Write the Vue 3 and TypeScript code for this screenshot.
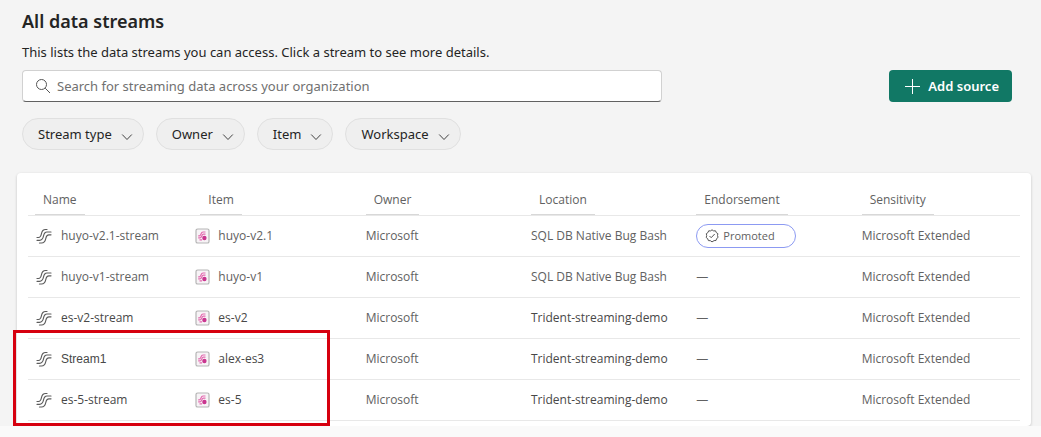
<script setup lang="ts">
interface StreamRow {
  name: string
  item: string
  location: string
  promoted: boolean
  tone: string
  plain?: boolean
}

const filters: string[] = ['Stream type', 'Owner', 'Item', 'Workspace']
const columns: string[] = ['Name', 'Item', 'Owner', 'Location', 'Endorsement', 'Sensitivity']
const rows: StreamRow[] = [
  { name: 'huyo-v2.1-stream', item: 'huyo-v2.1', location: 'SQL DB Native Bug Bash', promoted: true, tone: 'light' },
  { name: 'huyo-v1-stream', item: 'huyo-v1', location: 'SQL DB Native Bug Bash', promoted: false, tone: 'light' },
  { name: 'es-v2-stream', item: 'es-v2', location: 'Trident-streaming-demo', promoted: false, tone: 'dark' },
  { name: 'Stream1', item: 'alex-es3', location: 'Trident-streaming-demo', promoted: false, tone: 'dark', plain: true },
  { name: 'es-5-stream', item: 'es-5', location: 'Trident-streaming-demo', promoted: false, tone: 'dark' },
]
</script>

<template>
  <main class="page">
    <section class="streams">
      <header class="intro">
        <h1>All data streams</h1>
        <p>This lists the data streams you can access. Click a stream to see more details.</p>
        <div class="actions">
          <label class="search">
            <svg width="16" height="16" viewBox="0 0 16 16" fill="none" stroke="#555" aria-hidden="true">
              <circle cx="6.5" cy="6.5" r="5" />
              <path d="M10.2 10.2 15 15" />
            </svg>
            <input type="search" aria-label="Search streams" placeholder="Search for streaming data across your organization" />
          </label>
          <button type="button" class="add">
            <svg width="16" height="16" viewBox="0 0 16 16" stroke="#fff" aria-hidden="true">
              <path d="M8.5 1v15M1 8.5h15" />
            </svg>
            Add source
          </button>
        </div>
        <div class="filters">
          <button v-for="filter in filters" :key="filter" type="button" class="filter">
            {{ filter }}
            <svg width="12" height="12" viewBox="0 0 12 12" fill="none" stroke="#424242" aria-hidden="true">
              <path d="m1.2 4.5 4.8 5 4.8-5" />
            </svg>
          </button>
        </div>
      </header>

      <div class="card">
        <table>
          <thead>
            <tr>
              <th v-for="column in columns" :key="column" scope="col"><span>{{ column }}</span></th>
            </tr>
          </thead>
          <tbody>
            <tr v-for="row in rows" :key="row.name" :class="row.tone">
              <td>
                <div class="entry stream">
                  <svg width="16" height="16" viewBox="0 0 16 16" fill="none" stroke="#5c5c5c" stroke-width="1.2" stroke-linecap="round" aria-hidden="true">
                    <path d="M1 9.500h1.500C4.500 9.500 5 8 5.500 5.500S7.500 1.500 9.500 1.500H11" />
                    <path d="M1 12.300h2.500C6 12.300 7 10.500 7.500 8S9 4 11 4h4" />
                    <path d="M3.500 15H5.500C8 15 9.300 13 9.800 10.500S11.200 6.800 13 6.800h2" />
                  </svg>
                  <span :class="{ plain: row.plain }">{{ row.name }}</span>
                </div>
              </td>
              <td>
                <div class="entry item">
                  <svg width="15" height="16" viewBox="0 0 15 16" fill="none" aria-hidden="true">
                    <rect x="1" y="1" width="13" height="14" rx="1.600" fill="#f7f3f6" stroke="#b5b5b5" stroke-width="1.200" />
                    <path d="M3.200 7.800h1.300C6.500 7.800 5.500 4 8 4h2.500M3.200 9.800H5C7 9.800 6.500 6.200 8.500 6.200h2M4.500 11.800h2.500" stroke="#e36bb0" stroke-width="1.200" />
                    <circle cx="9.400" cy="10" r="2.200" fill="#c9358f" />
                  </svg>
                  <span>{{ row.item }}</span>
                </div>
              </td>
              <td>Microsoft</td>
              <td class="location">{{ row.location }}</td>
              <td>
                <span v-if="row.promoted" class="badge">
                  <svg width="14" height="14" viewBox="0 0 14 14" fill="none" stroke="#555" aria-hidden="true">
                    <path d="m7 .8 1.600 1.100 1.900-.1.800 1.800 1.600 1.100-.4 1.900.6 1.800-1.500 1.200-.6 1.900-1.900.1L7 12.900l-1.600-1.200-2-.1-.7-1.900-1.500-1.200.5-1.900-.4-1.900 1.600-1.100.8-1.800 1.900.1Z" />
                    <path d="m4.500 7 1.700 1.700L9.700 5" />
                  </svg>
                  Promoted
                </span>
                <span v-else class="dash">—</span>
              </td>
              <td>Microsoft Extended</td>
            </tr>
          </tbody>
        </table>
        <div class="highlight"></div>
      </div>
    </section>
  </main>
</template>

<style>
body {
  margin: 0;
  background: #fafafa;
}
</style>

<style scoped>
.page {
  font-family: 'Noto Sans', 'Open Sans', sans-serif;
  font-size: 13px;
  line-height: 20px;
  color: #242424;
}

.streams {
  background: #f4f4f4;
  padding: 9px 10px 0 17px;
}

.intro {
  padding: 0 19px 23px 5px;
}

h1 {
  margin: 0;
  font-size: 18px;
  font-weight: 600;
  line-height: 24px;
}

p {
  margin: 9px 0 8px;
}

.actions {
  display: flex;
  justify-content: space-between;
  gap: 24px;
}

.search {
  box-sizing: border-box;
  flex: 0 1 640px;
  height: 32px;
  display: flex;
  align-items: center;
  gap: 6px;
  padding: 0 12px;
  background: #fff;
  border: 1px solid #d1d1d1;
  border-bottom-color: #616161;
  border-radius: 4px;
}

.search input {
  flex: 1;
  min-width: 0;
  border: 0;
  padding: 0;
  outline: 0;
  background: none;
  font: inherit;
}

.search input::placeholder {
  color: #707070;
}

button {
  font: inherit;
  display: inline-flex;
  align-items: center;
  height: 32px;
  white-space: nowrap;
}

.add {
  gap: 8px;
  padding: 0 13px 0 15px;
  border: 0;
  border-radius: 4px;
  background: #117865;
  color: #fff;
  font-weight: 600;
}

.filters {
  display: flex;
  flex-wrap: wrap;
  gap: 12px;
  margin-top: 16px;
}

.filter {
  gap: 9px;
  padding: 0 10px 0 15px;
  border: 1px solid #e0e0e0;
  border-radius: 16px;
  background: #efefef;
  color: #242424;
}

.filter svg {
  margin-top: 3px;
}

.card {
  position: relative;
  padding: 12px 11px 5px;
  background: #fff;
  border-radius: 4px;
  box-shadow: 0 1px 3px rgba(0, 0, 0, 0.2);
}

table {
  width: 100%;
  table-layout: fixed;
  border-collapse: collapse;
  font-family: 'Open Sans', 'Noto Sans', sans-serif;
  font-size: 12px;
}

th,
td {
  padding: 0 0 0 7px;
  border-bottom: 1px solid #e8e8e8;
  text-align: left;
  white-space: nowrap;
}

th {
  height: 30px;
  color: #616161;
  font-weight: 400;
  vertical-align: bottom;
}

th span {
  display: inline-block;
  padding: 0 8px 4px;
  border-bottom: 1px solid #d8d8d8;
}

td {
  height: 40px;
  color: #616161;
}

.entry {
  display: flex;
  align-items: center;
}

.stream {
  gap: 9px;
  padding-left: 1px;
}

.item {
  gap: 8px;
  margin-left: -5px;
}

.dark .entry,
.dark .location {
  color: #484848;
}

.plain {
  font-family: 'Liberation Sans', sans-serif;
}

.badge {
  box-sizing: border-box;
  display: flex;
  align-items: center;
  gap: 4px;
  width: 100px;
  height: 24px;
  padding-left: 8px;
  border: 1px solid #8c9af2;
  border-radius: 12px;
  font-size: 11px;
}

.highlight {
  position: absolute;
  left: -4px;
  bottom: 0;
  box-sizing: border-box;
  width: 317px;
  height: 96px;
  border: 3px solid #d6000f;
}
</style>
